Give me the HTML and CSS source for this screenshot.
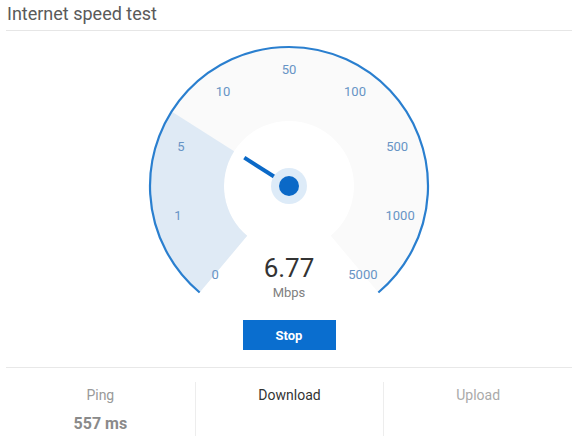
FILE: index.html
```html
<!DOCTYPE html>
<html lang="en">
<head>
    <meta charset="UTF-8">
    <title>Internet speed test</title>
    <link rel="stylesheet" href="styles.css">
</head>
<body>
    <header class="title-bar">
        <h1>Internet speed test</h1>
    </header>

    <div class="gauge">
        <svg class="gauge-dial" width="300" height="262" viewBox="0 0 300 262">
            <!-- scale band -->
            <path class="band" d="M60.65 252.48 A139 139 0 1 1 239.35 252.48 L191.78 195.79 A65 65 0 1 0 108.22 195.79 Z"/>
            <!-- progress up to 6.77 -->
            <path class="progress" d="M60.65 252.48 A139 139 0 0 1 32.64 71.52 L95.12 111.17 A65 65 0 0 0 108.22 195.79 Z"/>
            <path class="rim" d="M60.65 252.48 A139 139 0 1 1 239.35 252.48"/>
            <g class="ticks">
                <text x="76.1" y="234.1">0</text>
                <text x="38.9" y="175.8">1</text>
                <text x="41.9" y="106.7">5</text>
                <text x="84" y="51.8">10</text>
                <text x="150" y="29">50</text>
                <text x="216" y="51.8">100</text>
                <text x="258.1" y="106.7">500</text>
                <text x="261.1" y="175.8">1000</text>
                <text x="223.9" y="234.1">5000</text>
            </g>
            <line class="needle" x1="150" y1="146" x2="105.3" y2="117.6"/>
            <circle class="hub-halo" cx="150" cy="146" r="18"/>
            <circle class="hub" cx="150" cy="146" r="10"/>
        </svg>
        <div class="readout">
            <div class="readout-value">6.77</div>
            <div class="readout-unit">Mbps</div>
        </div>
    </div>

    <div class="actions">
        <button class="btn-stop">Stop</button>
    </div>

    <div class="stats">
        <div class="stat">
            <div class="stat-label">Ping</div>
            <div class="stat-value">557 ms</div>
        </div>
        <div class="stat stat-active">
            <div class="stat-label">Download</div>
        </div>
        <div class="stat stat-idle">
            <div class="stat-label">Upload</div>
        </div>
    </div>
</body>
</html>
```

FILE: styles.css
```css
body {
    margin: 0 6px;
    background: #fff;
    font-family: Roboto, "Noto Sans", sans-serif;
    color: #333;
}
.title-bar {
    height: 31px;
    box-sizing: border-box;
    padding: 3px 1px 0;
    border-bottom: 1px solid #e6e6e6;
}
.title-bar h1 {
    margin: 0;
    font-size: 18px;
    line-height: 21px;
    font-weight: 400;
    color: #5a5a5a;
}
.gauge {
    position: relative;
    width: 300px;
    margin: 9px auto 0;
}
.gauge-dial {
    display: block;
}
.band {
    fill: #fafafa;
}
.progress {
    fill: #dfeaf5;
}
.rim {
    fill: none;
    stroke: #2a7fcf;
    stroke-width: 2.2;
}
.ticks text {
    font-family: Roboto, sans-serif;
    font-size: 13px;
    fill: #6794c5;
    text-anchor: middle;
    dominant-baseline: central;
}
.needle {
    stroke: #0b69c7;
    stroke-width: 4;
}
.hub-halo {
    fill: #ddebf8;
}
.hub {
    fill: #0b69c7;
}
.readout {
    position: absolute;
    left: 0;
    right: 0;
    top: 213px;
    text-align: center;
}
.readout-value {
    font-size: 26px;
    line-height: 30px;
    color: #333;
}
.readout-unit {
    font-size: 13px;
    line-height: 20px;
    color: #808080;
}
.actions {
    display: flex;
    justify-content: center;
    margin-top: 18px;
}
.btn-stop {
    width: 93px;
    height: 30px;
    border: none;
    background: #0a6ecf;
    color: #fff;
    font-family: Roboto, sans-serif;
    font-size: 13px;
    font-weight: 700;
    cursor: pointer;
}
.stats {
    display: grid;
    grid-template-columns: 1fr 1fr 1fr;
    margin-top: 17px;
    padding-top: 14px;
    border-top: 1px solid #e8e8e8;
}
.stat {
    height: 54px;
    box-sizing: border-box;
    padding-top: 4px;
    text-align: center;
    color: #999;
}
.stat + .stat {
    border-left: 1px solid #ededed;
}
.stat-label {
    font-size: 14px;
    line-height: 18px;
}
.stat-value {
    margin-top: 10px;
    font-size: 16px;
    line-height: 20px;
    font-weight: 700;
    color: #8a8a8a;
}
.stat-active {
    color: #333;
}
.stat-idle {
    color: #aaa;
}
```
